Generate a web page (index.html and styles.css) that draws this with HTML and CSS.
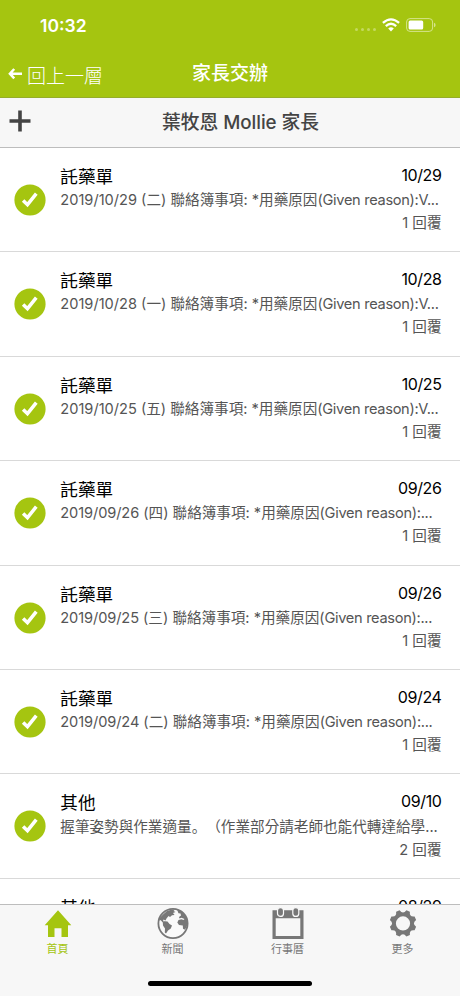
FILE: index.html
```html
<!DOCTYPE html>
<html lang="zh-Hant">
<head>
<meta charset="utf-8">
<title>家長交辦</title>
<link rel="stylesheet" href="styles.css">
</head>
<body>
<svg class="defs" width="0" height="0"><symbol id="check" viewBox="0 0 32 32"><circle cx="16" cy="16" r="15.6" fill="#a5c510"/><path d="M9.1 16.4 13.5 20.7 22.3 9.6" fill="none" stroke="#fff" stroke-width="3.5"/></symbol></svg>
<div class="app">
  <header class="top">
    <div class="status">
      <span class="time">10:32</span>
      <div class="indicators">
        <span class="dots"><i></i><i></i><i></i><i></i></span>
        <svg class="wifi" width="18" height="14" viewBox="0 0 18 14"><g fill="none" stroke="#fff" stroke-width="2.3"><path d="M.9 4.9Q9-2.1 17.1 4.9"/><path d="M3.8 8.1Q9 3.5 14.2 8.1"/></g><path d="M6.2 10.4Q9 8.1 11.8 10.4L9 13.4Z" fill="#fff"/></svg>
        <svg class="battery" width="30" height="14" viewBox="0 0 30 14"><rect x=".6" y=".6" width="26" height="12.8" rx="3.4" fill="none" stroke="#d5e48d"/><rect x="2.6" y="2.5" width="14.6" height="9" rx="1.5" fill="#fff"/><path d="M28 4.7q1.6.6 1.6 2.3T28 9.3z" fill="#d5e48d"/></svg>
      </div>
    </div>
    <nav class="nav">
      <a class="back"><svg width="14" height="12" viewBox="0 0 14 12"><path d="M6.2 1 1.9 5.7 6.2 10.4M2 5.7H14" fill="none" stroke="#fff" stroke-width="2.5"/></svg><span>回上一層</span></a>
      <h1>家長交辦</h1>
    </nav>
  </header>
  <div class="subhead">
    <svg class="plus" width="22" height="22" viewBox="0 0 22 22"><path d="M11 .5v21M.5 11h21" stroke="#444" stroke-width="3.6"/></svg>
    <h2>葉牧恩 Mollie 家長</h2>
  </div>
  <main class="list">
    <article class="row"><svg class="check"><use href="#check"/></svg><div class="body"><div class="head"><h3>託藥單</h3><time>10/29</time></div><p>2019/10/29 (二) 聯絡簿事項: *用藥原因<span class="latin">(Given reason):V...</span></p><div class="reply">1 回覆</div></div></article>
    <article class="row"><svg class="check"><use href="#check"/></svg><div class="body"><div class="head"><h3>託藥單</h3><time>10/28</time></div><p>2019/10/28 (一) 聯絡簿事項: *用藥原因<span class="latin">(Given reason):V...</span></p><div class="reply">1 回覆</div></div></article>
    <article class="row"><svg class="check"><use href="#check"/></svg><div class="body"><div class="head"><h3>託藥單</h3><time>10/25</time></div><p>2019/10/25 (五) 聯絡簿事項: *用藥原因<span class="latin">(Given reason):V...</span></p><div class="reply">1 回覆</div></div></article>
    <article class="row"><svg class="check"><use href="#check"/></svg><div class="body"><div class="head"><h3>託藥單</h3><time>09/26</time></div><p><span class="date">2019/09/26</span> (四) 聯絡簿事項: *用藥原因<span class="latin">(Given reason):...</span></p><div class="reply">1 回覆</div></div></article>
    <article class="row"><svg class="check"><use href="#check"/></svg><div class="body"><div class="head"><h3>託藥單</h3><time>09/26</time></div><p><span class="date">2019/09/25</span> (三) 聯絡簿事項: *用藥原因<span class="latin">(Given reason):...</span></p><div class="reply">1 回覆</div></div></article>
    <article class="row"><svg class="check"><use href="#check"/></svg><div class="body"><div class="head"><h3>託藥單</h3><time>09/24</time></div><p><span class="date">2019/09/24</span> (二) 聯絡簿事項: *用藥原因<span class="latin">(Given reason):...</span></p><div class="reply">1 回覆</div></div></article>
    <article class="row"><svg class="check"><use href="#check"/></svg><div class="body"><div class="head"><h3>其他</h3><time>09/10</time></div><p>握筆姿勢與作業適量<span class="stop" lang="zh-Hans">。</span>（作業部分請老師也能代轉達給學...</p><div class="reply">2 回覆</div></div></article>
    <article class="row"><div class="check"></div><div class="body"><div class="head"><h3>其他</h3><time>08/29</time></div></div></article>
  </main>
  <footer class="tabs">
    <div class="tabrow">
      <a class="tab active"><svg width="32" height="32" viewBox="0 0 32 32"><path d="M16 2.2 29.3 17.2H26V29.1H19.5V20.2H12.5V29.1H6V17.2H2.7Z" fill="currentColor"/></svg><span>首頁</span></a>
      <a class="tab"><svg width="32" height="32" viewBox="0 0 32 32"><circle cx="16" cy="15.5" r="14.6" fill="#fafafa" stroke="currentColor" stroke-width="1.8"/><path d="M6 6.5 10 3 15 1.5 18 1.5 16.5 3 18.5 4 16 5 17.5 7 15 7.2 13 9 11.5 8 9.5 10.5 8.5 12.5 6.5 11.5 6 13.3 8 13.2 10.5 13.5 12.5 16 15 17.5 13.8 20.5 11 22.5 9 25.5 7.8 24.5 8 20.5 6 17.5 5.8 14.5 3.5 12 2.5 13 3 9.5Z" fill="currentColor"/><path d="M20 1.5 25 3.5 28.5 7.5 30.5 13 30 18 28 21.8 26 20.8 25.8 17.5 22 17 20.3 14.5 21.5 12 24.5 11.2 26.5 12 27.5 11 24.5 9.8 22.5 10.5 22 9 24 7.5 23.5 5.5 21.5 5.3Z" fill="currentColor"/></svg><span>新聞</span></a>
      <a class="tab"><svg width="32" height="32" viewBox="0 0 32 32"><path d="M.5 2.2H31.5V31H.5ZM3.7 10.3V28H28.3V10.3Z" fill="currentColor" fill-rule="evenodd"/><g fill="currentColor" stroke="#fafafa" stroke-width="1.2"><rect x="5.5" y="-.4" width="6" height="8.8" rx="3"/><rect x="20.8" y="-.4" width="6" height="8.8" rx="3"/></g></svg><span>行事曆</span></a>
      <a class="tab"><svg width="32" height="32" viewBox="-16 -15.4 32 32"><path d="M13.1-3.4Q8.7 0 13.1 3.4L11.6 6.9Q6.1 6.1 6.9 11.6L3.4 13.1Q0 8.7-3.4 13.1L-6.9 11.6Q-6.1 6.1-11.6 6.9L-13.1 3.4Q-8.7 0-13.1-3.4L-11.6-6.9Q-6.1-6.1-6.9-11.6L-3.4-13.1Q0-8.7 3.4-13.1L6.9-11.6Q6.1-6.1 11.6-6.9ZM0-7.1A7.1 7.1 0 1 0 0 7.1 7.1 7.1 0 1 0 0-7.1Z" fill="currentColor" fill-rule="evenodd"/></svg><span>更多</span></a>
    </div>
    <div class="home-bar"></div>
  </footer>
</div>
</body>
</html>
```
FILE: styles.css
```css
* { box-sizing: border-box; }
body { margin: 0; font-family: Inter, "Noto Sans CJK TC", sans-serif; background: #fff; }
h1, h2, h3, p { margin: 0; font-weight: 400; }
.defs { display: block; }
.app { width: 460px; height: 996px; display: flex; flex-direction: column; overflow: hidden; }
.top { height: 98px; flex: none; background: #a5c510; color: #fff; border-bottom: 1px solid #95ad2b; }
.status { height: 50px; display: flex; justify-content: space-between; padding: 0 24px 0 40px; }
.time { font-size: 17.5px; font-weight: 600; line-height: 52px; }
.indicators { display: flex; padding-top: 18px; }
.dots { display: flex; gap: 3px; padding-top: 10px; margin-right: 6px; }
.dots i { width: 3px; height: 3px; border-radius: 50%; background: #c4d960; }
.wifi { margin-right: 6px; }
.nav { height: 47px; display: grid; grid-template-columns: 1fr auto 1fr; align-items: center; padding: 1px 8px 0; }
.back { display: flex; align-items: center; gap: 5px; font-size: 19px; font-weight: 300; }
.back svg { margin-top: -1px; }
.nav h1 { font-size: 19px; font-weight: 500; line-height: 28px; }
.subhead { height: 50px; flex: none; display: grid; grid-template-columns: 1fr auto 1fr; align-items: center; padding: 0 9px; background: #f7f7f7; border-bottom: 1px solid #bdbdbd; color: #444; }
.plus { margin-top: -3px; }
.subhead h2 { grid-column: 2; padding-left: 21px; font-size: 18.8px; font-weight: 500; line-height: 28px; letter-spacing: -.05px; }
.list { flex: 1; min-height: 0; overflow: hidden; }
.row { height: 104.4px; display: flex; padding: 16px 18.5px 0 14px; border-bottom: 1px solid #d9d9d9; }
.check { width: 32px; height: 32px; margin: 20px 14.3px 0 0; flex: none; }
.body { flex: 1; min-width: 0; }
.head { height: 24px; display: flex; justify-content: space-between; color: #000; }
.head h3 { font-size: 17.6px; line-height: 26px; }
.head time { font-size: 16px; line-height: 23px; letter-spacing: -.4px; }
.body p { font-size: 14.6px; line-height: 24px; white-space: nowrap; color: #555; text-spacing-trim: space-all; font-feature-settings: "chws" 0; }
.latin { letter-spacing: -.3px; }
.date { letter-spacing: -.1px; }
.stop { font-family: "Noto Sans CJK SC", sans-serif; }
.reply { font-size: 14.6px; line-height: 22px; text-align: right; color: #555; }
.tabs { height: 92px; flex: none; background: #f7f7f7; border-top: 1px solid #bdbdbd; }
.tabrow { display: grid; grid-template-columns: repeat(4, 1fr); height: 76px; padding-top: 3px; }
.tab { display: flex; flex-direction: column; align-items: center; color: #777; font-size: 11px; line-height: 17px; }
.tab svg { display: block; margin-bottom: 1px; overflow: visible; }
.tab.active { color: #a5c510; }
.home-bar { width: 164px; height: 5px; border-radius: 3px; background: #000; margin: 0 auto; }
```
